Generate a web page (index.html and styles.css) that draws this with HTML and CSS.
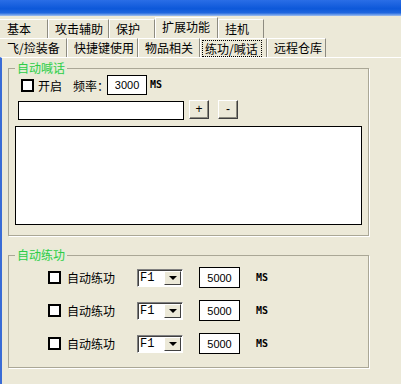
FILE: index.html
```html
<!DOCTYPE html>
<html lang="zh-CN">
<head>
    <meta charset="UTF-8">
    <title>练功/喊话</title>
    <link rel="stylesheet" href="styles.css">
</head>
<body>
    <div class="titlebar"></div>
    <div class="tabs">
        <div class="tab-row">
            <span class="tab first t-basic">基本</span>
            <span class="tab t-attack">攻击辅助</span>
            <span class="tab t-protect">保护</span>
            <span class="tab raised t-ext">扩展功能</span>
            <span class="tab t-hang">挂机</span>
        </div>
        <div class="tab-row">
            <span class="tab first t-pick">飞/捡装备</span>
            <span class="tab t-keys">快捷键使用</span>
            <span class="tab t-items">物品相关</span>
            <span class="tab active t-train"><span class="focus">练功/喊话</span></span>
            <span class="tab t-store">远程仓库</span>
        </div>
    </div>
    <main class="pane">
        <fieldset class="group group-talk">
            <legend>自动喊话</legend>
            <div class="talk-row">
                <label class="check"><span class="box"></span>开启</label>
                <span class="freq">频率：</span>
                <input class="num" type="text" value="3000">
                <span class="unit">MS</span>
            </div>
            <div class="msg-row">
                <input class="msg" type="text">
                <button class="btn">+</button>
                <button class="btn btn-minus">-</button>
            </div>
            <textarea class="msg-list"></textarea>
        </fieldset>

        <fieldset class="group group-train">
            <legend>自动练功</legend>
            <div class="train-row">
                <label class="check"><span class="box"></span>自动练功</label>
                <div class="combo"><span class="combo-text">F1</span><span class="drop"></span></div>
                <input class="num num-wide" type="text" value="5000">
                <span class="unit unit-far">MS</span>
            </div>
            <div class="train-row">
                <label class="check"><span class="box"></span>自动练功</label>
                <div class="combo"><span class="combo-text">F1</span><span class="drop"></span></div>
                <input class="num num-wide" type="text" value="5000">
                <span class="unit unit-far">MS</span>
            </div>
            <div class="train-row">
                <label class="check"><span class="box"></span>自动练功</label>
                <div class="combo"><span class="combo-text">F1</span><span class="drop"></span></div>
                <input class="num num-wide" type="text" value="5000">
                <span class="unit unit-far">MS</span>
            </div>
        </fieldset>
    </main>
</body>
</html>
```

FILE: styles.css
```css
* {
    margin: 0;
    padding: 0;
    box-sizing: border-box;
}

body {
    width: 401px;
    height: 384px;
    overflow: hidden;
    background-color: #ece9d8;
    font: 12px "Noto Sans CJK SC", sans-serif;
    color: #000;
}

.titlebar {
    height: 16px;
    background: linear-gradient(to bottom, #2a6ee6 0%, #0d58d9 55%, #1f66de 80%, #9fbff0 100%);
}

/* tabs */
.tabs {
    padding-top: 3px;
}

.tab-row {
    display: flex;
    height: 19px;
}

.tab {
    height: 19px;
    line-height: 17px;
    padding-left: 6px;
    border-top: 1px solid #fff;
    border-left: 1px solid #fff;
    border-right: 1px solid #8d8b80;
    white-space: nowrap;
}

.tab.first {
    border-left: none;
    padding-left: 7px;
}

.tab.raised {
    height: 21px;
    margin-top: -2px;
    line-height: 18px;
}

.tab.active {
    padding-left: 1px;
    padding-top: 1px;
}

.focus {
    display: inline-block;
    height: 17px;
    line-height: 15px;
    padding: 0 3px 0 2px;
    border: 1px dotted #000;
}

.t-basic { width: 48px; }
.t-attack { width: 61px; }
.t-protect { width: 46px; }
.t-ext { width: 63px; }
.t-hang { width: 46px; }
.t-pick { width: 67px; }
.t-keys { width: 71px; }
.t-items { width: 62px; }
.t-train { width: 67px; }
.t-store { width: 59px; }

/* content pane */
.pane {
    height: 327px;
    border-left: 2px solid #3a6cd6;
    border-top: 1px solid #fff;
    padding-top: 4px;
}

.group {
    width: 361px;
    margin-left: 6px;
    border: 1px solid #aaa796;
    box-shadow: 1px 1px 0 #fff;
    min-width: 0;
}

.group legend {
    margin-left: 6px;
    padding: 0 2px;
    line-height: 12px;
    color: #2fcb48;
    text-shadow: 0 0 2px #c9f7cc;
}

.group-talk {
    padding-bottom: 10px;
}

.group-train {
    margin-top: 13px;
    padding-bottom: 13px;
}

.check {
    display: flex;
    align-items: center;
}

.box {
    width: 13px;
    height: 13px;
    border: 2px solid #000;
    background-color: #fff;
    margin-right: 4px;
}

.num {
    width: 40px;
    height: 20px;
    border: 1px solid #000;
    background-color: #fff;
    font: 11px "Liberation Sans", sans-serif;
    text-align: center;
    outline: none;
}

.unit {
    font: bold 10px "DejaVu Sans Mono", monospace;
    margin-left: 3px;
    margin-top: -1px;
}

/* auto talk */
.talk-row {
    display: flex;
    align-items: center;
    height: 20px;
    margin-top: 1px;
    padding-left: 12px;
}

.freq {
    margin-left: 11px;
}

.talk-row .num {
    margin-left: -2px;
}

.msg-row {
    display: flex;
    align-items: flex-start;
    margin-top: 5px;
    height: 20px;
}

.msg {
    width: 166px;
    height: 19px;
    margin: 1px 0 0 9px;
    border: 1px solid #000;
    background-color: #fff;
    outline: none;
}

.btn {
    width: 20px;
    height: 19px;
    margin-left: 5px;
    background-color: #ece9d8;
    border: 1px solid;
    border-color: #fff #404040 #404040 #fff;
    box-shadow: inset -1px -1px 0 #8e8c80;
    font: 12px "Liberation Sans", sans-serif;
    line-height: 15px;
    color: #000;
}

.btn-minus {
    margin-left: 9px;
}

.msg-list {
    display: block;
    width: 347px;
    height: 99px;
    margin: 6px 0 0 6px;
    border: 1px solid #000;
    background-color: #fff;
    resize: none;
    outline: none;
}

/* auto train */
.train-row {
    display: flex;
    align-items: center;
    height: 21px;
    margin-top: 12px;
    padding-left: 39px;
}

.train-row:first-of-type {
    margin-top: 6px;
}

.train-row .box {
    margin-right: 6px;
}

.combo {
    display: flex;
    align-items: center;
    width: 46px;
    height: 18px;
    margin-left: 22px;
    padding-left: 2px;
    background-color: #fff;
    border: 1px solid;
    border-color: #808080 #fff #fff #808080;
    box-shadow: inset 1px 1px 0 #404040;
}

.combo-text {
    flex: 1;
    font: 12px "Liberation Mono", monospace;
    line-height: 14px;
}

.drop {
    display: flex;
    align-items: center;
    justify-content: center;
    width: 17px;
    height: 14px;
    margin-right: 1px;
    background-color: #ece9d8;
    border: 1px solid;
    border-color: #fff #404040 #404040 #fff;
}

.drop::after {
    content: "";
    border-left: 4px solid transparent;
    border-right: 4px solid transparent;
    border-top: 4px solid #000;
}

.num-wide {
    width: 41px;
    height: 21px;
    margin-left: 16px;
}

.unit-far {
    margin-left: 16px;
}
```
